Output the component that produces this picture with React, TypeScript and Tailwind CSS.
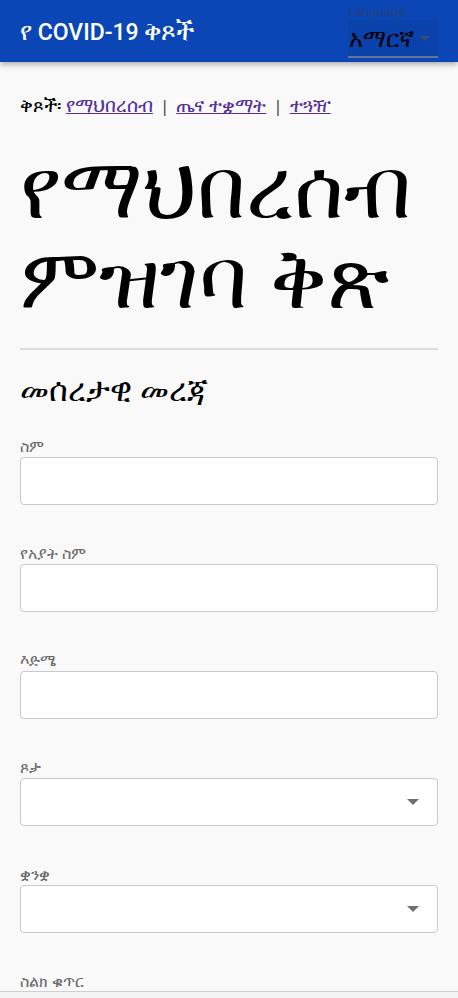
const fields = [
  { label: "ስም", kind: "input" },
  { label: "የአያት ስም", kind: "input" },
  { label: "እድሜ", kind: "input" },
  { label: "ጾታ", kind: "select" },
  { label: "ቋንቋ", kind: "select" },
  { label: "ስልክ ቁጥር", kind: "input" },
];

function Caret({ className = "" }: { className?: string }) {
  return (
    <svg viewBox="0 0 10 5" className={className} aria-hidden>
      <path d="M0 0h10L5 5z" fill="currentColor" />
    </svg>
  );
}

function Field({ label, kind }: { label: string; kind: string }) {
  return (
    <div className="mb-[39px]">
      <label className="block h-[18px] text-[16px] leading-[18px] text-[#6b6b6b]">
        {label}
      </label>
      <div className="mt-[2px] flex h-[48px] items-center justify-end rounded-[4px] border border-[#c9c9c9] bg-white pr-[18px]">
        {kind === "select" && <Caret className="h-[6px] w-[12px] text-[#6f6f6f]" />}
      </div>
    </div>
  );
}

export default function App() {
  return (
    <div className="min-h-screen bg-[#f9f9f9] font-['Noto_Sans',Roboto,sans-serif] text-black">
      <header className="flex h-[62px] items-center justify-between bg-[#0b46b6] pl-[20px] pr-[20px] shadow-[0_2px_6px_rgba(0,0,0,0.35)]">
        <h1 className="font-['Roboto','Noto_Sans',sans-serif] text-[23px] font-medium text-white">
          <span className="text-[25px]">የ</span> COVID-19 <span className="text-[26px]">ቅጾች</span>
        </h1>
        <div className="flex w-[90px] flex-col self-start pt-[3px]">
          <span className="font-['Roboto',sans-serif] text-[13px] leading-[17px] text-[#22407e]">
            Language:
          </span>
          <div className="flex h-[38px] items-center justify-between border-b-2 border-[#6a7390] bg-[#0a42ab] pl-[1px] pr-[8px]">
            <span className="text-[24px] leading-[30px] text-black">አማርኛ</span>
            <Caret className="h-[5px] w-[10px] text-[#3b4a6e]" />
          </div>
        </div>
      </header>

      <main className="px-[20px] pt-[32px]">
        <nav className="text-[19px] leading-[22px]">
          <span>ቅጾች፡ </span>
          <a href="#" className="text-[#55309c] underline">የማህበረሰብ</a>
          <span className="mx-[7px] text-[17px] text-[#444]">|</span>
          <a href="#" className="text-[#55309c] underline">ጤና ተቋማት</a>
          <span className="mx-[7px] text-[17px] text-[#444]">|</span>
          <a href="#" className="text-[#55309c] underline">ተጓዥ</a>
        </nav>

        <h2 className="mt-[23px] text-[85px] leading-[90px]">የማህበረሰብ ምዝገባ ቅጽ</h2>

        <hr className="mt-[28px] border-t-2 border-[#dcdcdc]" />

        <h3 className="mt-[19px] text-[32px] leading-[40px]">መሰረታዊ መረጃ</h3>

        <div className="mt-[28px]">
          {fields.map((f) => (
            <Field key={f.label} label={f.label} kind={f.kind} />
          ))}
        </div>
      </main>

      <div className="fixed bottom-0 left-0 right-0 h-[7px] border-t border-[#cfcfcf] bg-[#f3f3f3]" />
    </div>
  );
}
